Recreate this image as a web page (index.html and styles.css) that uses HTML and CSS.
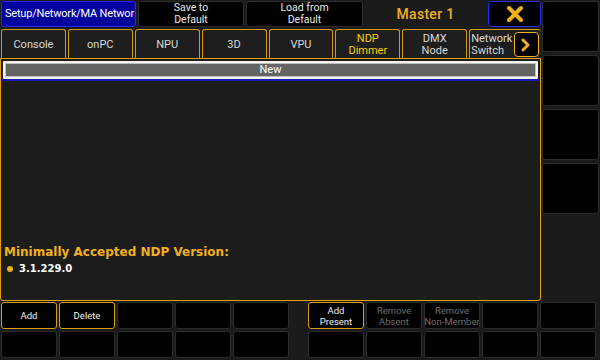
FILE: index.html
```html
<!DOCTYPE html>
<html lang="en">
<head>
    <meta charset="UTF-8">
    <title>Setup/Network/MA Network</title>
    <link rel="stylesheet" href="styles.css">
</head>
<body>
    <div class="screen">
        <div class="left">
            <div class="title-bar">
                <div class="btn btn-title">Setup/Network/MA Networ</div>
                <div class="btn btn-save">Save to<br>Default</div>
                <div class="btn btn-load">Load from<br>Default</div>
                <div class="master">Master 1</div>
                <div class="btn btn-close">
                    <svg width="18" height="18" viewBox="0 0 18 18">
                        <path d="M3 3 L15 15 M15 3 L3 15" stroke="#f0b020" stroke-width="4" stroke-linecap="round"/>
                    </svg>
                </div>
            </div>
            <div class="tabs">
                <div class="tab">Console</div>
                <div class="tab">onPC</div>
                <div class="tab">NPU</div>
                <div class="tab">3D</div>
                <div class="tab">VPU</div>
                <div class="tab active">NDP<br>Dimmer</div>
                <div class="tab">DMX<br>Node</div>
                <div class="tab tab-last">
                    <span>Network<br>Switch</span>
                    <div class="more">
                        <svg width="12" height="14" viewBox="0 0 12 14">
                            <path d="M3 2 L8 7 L3 12" stroke="#f0b020" stroke-width="3" fill="none" stroke-linecap="round" stroke-linejoin="round"/>
                        </svg>
                    </div>
                </div>
            </div>
            <div class="panel">
                <div class="grid-head">
                    <div class="grid-head-inner">New</div>
                </div>
                <div class="grid-line"></div>
                <div class="panel-body"></div>
                <div class="version-title">Minimally Accepted NDP Version:</div>
                <div class="version-item"><span class="dot"></span>3.1.229.0</div>
            </div>
        </div>
        <div class="side">
            <div class="cell side-cell"></div>
            <div class="cell side-cell"></div>
            <div class="cell side-cell"></div>
            <div class="cell side-cell"></div>
        </div>
    </div>
    <div class="bottom">
        <div class="cell key on">Add</div>
        <div class="cell key on">Delete</div>
        <div class="cell key"></div>
        <div class="cell key"></div>
        <div class="cell key"></div>
        <div class="spacer"></div>
        <div class="cell key on">Add<br>Present</div>
        <div class="cell key dim">Remove<br>Absent</div>
        <div class="cell key dim">Remove<br>Non-Member</div>
        <div class="cell key"></div>
        <div class="cell key"></div>

        <div class="cell key"></div>
        <div class="cell key"></div>
        <div class="cell key"></div>
        <div class="cell key"></div>
        <div class="cell key"></div>
        <div class="spacer"></div>
        <div class="cell key"></div>
        <div class="cell key"></div>
        <div class="cell key"></div>
        <div class="cell key"></div>
        <div class="cell key"></div>
    </div>
</body>
</html>
```

FILE: styles.css
```css
body {
    margin: 0;
    width: 600px;
    height: 360px;
    overflow: hidden;
    background: #1b1b1b;
    font-family: Roboto, "DejaVu Sans", sans-serif;
    font-size: 11px;
    color: #e6e6e6;
}
.screen {
    display: flex;
    height: 301px;
}
.left {
    width: 541px;
    display: flex;
    flex-direction: column;
}
.title-bar {
    display: flex;
    height: 26px;
    padding: 1px 0 0 1px;
    gap: 2px;
}
.btn {
    box-sizing: border-box;
    height: 26px;
    background: #000;
    border: 1px solid #2c2c2c;
    border-radius: 3px;
    display: flex;
    align-items: center;
    justify-content: center;
    text-align: center;
    line-height: 12px;
    font-size: 10.5px;
}
.btn-title {
    width: 135px;
    background: #00009c;
    border-color: #2a2af0;
    color: #fff;
    justify-content: flex-start;
    padding-left: 3px;
    font-size: 11px;
    letter-spacing: -0.2px;
    white-space: nowrap;
    overflow: hidden;
}
.btn-save {
    width: 106px;
}
.btn-load {
    width: 117px;
}
.master {
    width: 121px;
    display: flex;
    align-items: center;
    justify-content: center;
    color: #f0b020;
    font-size: 14px;
    font-weight: 500;
    letter-spacing: 0.3px;
}
.btn-close {
    width: 53px;
    border-color: #2a2af0;
}
.tabs {
    display: flex;
    gap: 2px;
    padding: 2px 0 0 1px;
    height: 29px;
}
.tab {
    box-sizing: border-box;
    width: 65px;
    height: 30px;
    background: #1e1e1e;
    border: 1px solid #d39a10;
    border-bottom: none;
    border-radius: 3px 3px 0 0;
    display: flex;
    align-items: center;
    justify-content: center;
    text-align: center;
    line-height: 12px;
    color: #d8d8d8;
}
.tab.active {
    color: #f6d000;
}
.tab-last {
    width: 72px;
    justify-content: space-between;
    padding: 0 2px 0 1px;
    text-align: left;
    border-right: none;
}
.more {
    box-sizing: border-box;
    width: 25px;
    height: 25px;
    border: 1px solid #f0b020;
    border-radius: 4px;
    background: #000;
    display: flex;
    align-items: center;
    justify-content: center;
}
.panel {
    flex: 1;
    box-sizing: border-box;
    border: 1px solid #e0a010;
    border-radius: 0 0 3px 3px;
    background: #1c1c1c;
    display: flex;
    flex-direction: column;
    padding: 2px 2px 0 2px;
}
.grid-head {
    height: 18px;
    box-sizing: border-box;
    border: 2px solid #f4f4f4;
    border-radius: 1px;
    background: #bdbdbd;
    padding: 1px;
}
.grid-head-inner {
    height: 100%;
    background: #646464;
    color: #fff;
    text-align: center;
    line-height: 12px;
}
.grid-line {
    height: 2px;
    background: #1818b0;
    margin: 0 -1px;
}
.panel-body {
    flex: 1;
}
.version-title {
    color: #f0b020;
    font-family: "DejaVu Sans", sans-serif;
    font-weight: bold;
    font-size: 12px;
    padding-left: 1px;
    line-height: 16px;
}
.version-item {
    color: #fff;
    font-family: "DejaVu Sans", sans-serif;
    font-weight: bold;
    font-size: 10px;
    line-height: 14px;
    padding: 2px 0 24px 4px;
    display: flex;
    align-items: center;
}
.dot {
    width: 6px;
    height: 6px;
    border-radius: 50%;
    background: #f0b020;
    margin-right: 6px;
}
.side {
    flex: 1;
    display: flex;
    flex-direction: column;
    gap: 3px;
    padding: 1px 1px 0 1px;
}
.cell {
    box-sizing: border-box;
    background: #000;
    border: 1px solid #2c2c2c;
    border-radius: 3px;
}
.side-cell {
    height: 51px;
}
.bottom {
    display: grid;
    grid-template-columns: repeat(5, 56px) 15px repeat(5, 56px);
    grid-auto-rows: 27px;
    column-gap: 2px;
    row-gap: 2px;
    padding: 1px 0 0 1px;
}
.key {
    display: flex;
    align-items: center;
    justify-content: center;
    text-align: center;
    line-height: 11px;
    font-size: 9.5px;
    white-space: nowrap;
    overflow: hidden;
}
.key.on {
    border-color: #d89c10;
    color: #f0f0f0;
}
.key.dim {
    color: #6e6e6e;
}
```
